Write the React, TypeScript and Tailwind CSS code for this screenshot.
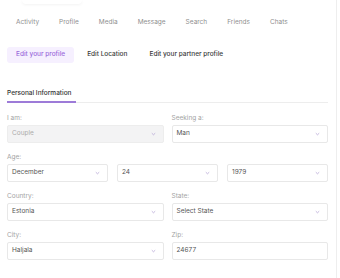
import React from "react";

function Chevron() {
  return (
    <svg width="5" height="4" viewBox="0 0 5 4" className="absolute right-[7px] top-1/2 -translate-y-1/2">
      <path d="M0.8 1.2 L2.5 2.8 L4.2 1.2" fill="none" stroke="#b6a6d6" strokeWidth="0.8" />
    </svg>
  );
}

function Field({ value, select = true, disabled = false }: { value: string; select?: boolean; disabled?: boolean }) {
  return (
    <div
      className={`relative h-[18px] rounded-[2px] border flex items-center pl-[4px] text-[6.5px] ${
        disabled ? "bg-[#f3f3f4] border-[#ededed] text-[#ababab]" : "bg-white border-[#e8e8e8] text-[#555]"
      }`}
    >
      {value}
      {select && <Chevron />}
    </div>
  );
}

function Label({ children }: { children: React.ReactNode }) {
  return <div className="h-[8px] leading-[8px] text-[6.5px] text-[#a3a3a3] mb-[3px]">{children}</div>;
}

export default function App() {
  const nav = ["Activity", "Profile", "Media", "Message", "Search", "Friends", "Chats"];
  return (
    <div
      className="w-[337px] h-[278px] bg-white border-r border-[#eeeeee] overflow-hidden"
      style={{ fontFamily: "Inter, 'Noto Sans', sans-serif" }}
    >
      <div className="h-[6px] flex">
        <div className="ml-[22px] w-[60px] h-[4px] rounded-b-[4px] bg-white shadow-[0_1px_3px_rgba(0,0,0,0.05)]" />
      </div>
      <div className="h-[34px] flex items-center pl-[16px] gap-[20px] text-[6.5px] text-[#8f8f8f]">
        {nav.map((n) => (
          <span key={n}>{n}</span>
        ))}
      </div>
      <div className="mt-[7px] h-[16px] flex pl-[7px] gap-[4px] text-[6.5px] font-medium">
        <div className="h-full px-[9px] flex items-center rounded-[3px] bg-[#f6f0ff] text-[#9b6bdb]">Edit your profile</div>
        <div className="h-full px-[9px] flex items-center text-[#3a3a3a]">Edit Location</div>
        <div className="h-full px-[9px] flex items-center text-[#3a3a3a]">Edit your partner profile</div>
      </div>
      <div className="mx-[7px] w-[321px]">
        <div className="mt-[25px] border-b border-[#ededed] flex">
          <span className="inline-block leading-[10px] text-[6.5px] font-medium text-[#333] pb-[3px] pr-[4px] border-b-[2px] border-[#9d7bd8] mb-[-1px]">
            Personal Information
          </span>
        </div>
        <div className="mt-[11px] flex flex-col gap-[10px]">
          <div className="grid grid-cols-2 gap-[8px]">
            <div>
              <Label>I am:</Label>
              <Field value="Couple" disabled />
            </div>
            <div>
              <Label>Seeking a:</Label>
              <Field value="Man" />
            </div>
          </div>
          <div>
            <Label>Age:</Label>
            <div className="grid grid-cols-3 gap-[9px]">
              <Field value="December" />
              <Field value="24" />
              <Field value="1979" />
            </div>
          </div>
          <div className="grid grid-cols-2 gap-[8px]">
            <div>
              <Label>Country:</Label>
              <Field value="Estonia" />
            </div>
            <div>
              <Label>State:</Label>
              <Field value="Select State" />
            </div>
          </div>
          <div className="grid grid-cols-2 gap-[8px]">
            <div>
              <Label>City:</Label>
              <Field value="Haljala" />
            </div>
            <div>
              <Label>Zip:</Label>
              <Field value="24677" select={false} />
            </div>
          </div>
        </div>
      </div>
    </div>
  );
}
